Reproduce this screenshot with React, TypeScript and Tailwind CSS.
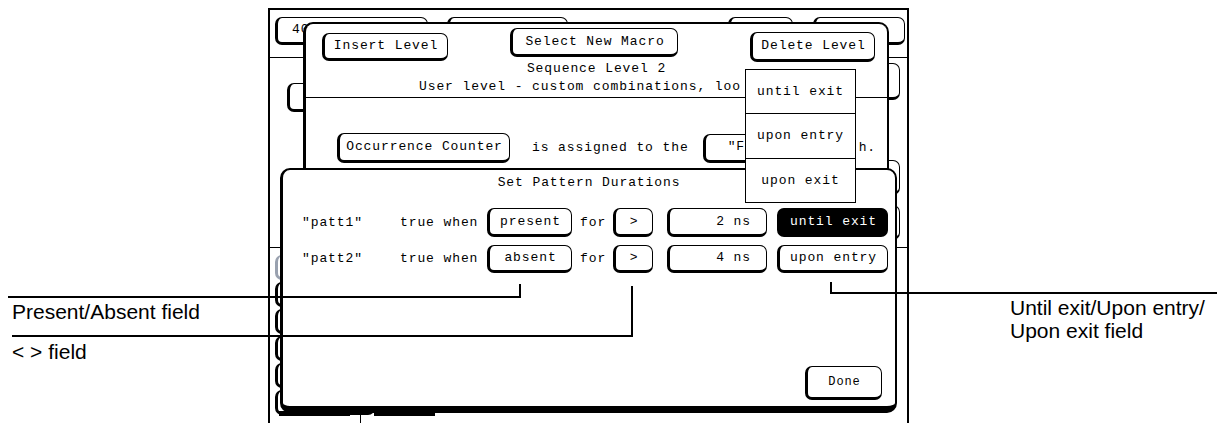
import React from "react";

type BtnProps = {
  className?: string;
  dark?: boolean;
  children?: React.ReactNode;
};

function Btn({ className = "", dark = false, children }: BtnProps) {
  return (
    <div
      className={`flex shrink-0 items-center justify-center whitespace-nowrap rounded-[7px] border-t border-r border-b-[3px] border-l-[3px] border-black ${
        dark ? "bg-black text-white" : "bg-white text-black"
      } ${className}`}
    >
      {children}
    </div>
  );
}

function BackScreen() {
  return (
    <div className="absolute left-[268px] top-[8px] flex h-[415px] w-[641px] flex-col border-x-2 border-t-2 border-black">
      {/* top softkey row */}
      <div className="flex h-[48px] shrink-0 items-start border-b border-black pl-[5px] pt-[7px]">
        <Btn className="h-[28px] w-[153px] justify-start pl-[14px]">40</Btn>
        <Btn className="ml-[19px] h-[28px] w-[121px]" />
        <Btn className="ml-[160px] h-[28px] w-[65px]" />
        <Btn className="ml-[20px] h-[28px] w-[92px]" />
      </div>
      {/* middle area */}
      <div className="flex h-[190px] shrink-0 justify-between border-b border-black">
        <div className="pl-[17px] pt-[25px]">
          <Btn className="h-[29px] w-[100px]" />
        </div>
        <div className="flex flex-col pr-[7px] pt-[5px]">
          <Btn className="h-[37px] w-[100px]" />
          <Btn className="mt-[60px] h-[35px] w-[100px]" />
          <Btn className="mt-[10px] h-[35px] w-[100px]" />
        </div>
      </div>
      {/* lower left stack */}
      <div className="flex flex-col gap-[2px] pl-[5px] pt-[7px]">
        <Btn className="h-[25px] w-[100px] border-l border-gray-400" />
        <Btn className="h-[25px] w-[100px]" />
        <Btn className="h-[25px] w-[100px]" />
        <Btn className="h-[25px] w-[100px]" />
        <Btn className="h-[25px] w-[100px]" />
        <Btn className="h-[25px] w-[100px]" />
      </div>
    </div>
  );
}

function SequenceDialog() {
  return (
    <div className="absolute left-[303px] top-[22px] flex h-[160px] w-[586px] flex-col rounded-t-[10px] border-t-2 border-r-2 border-l-[3px] border-black bg-white">
      <div className="flex h-[36px] shrink-0 items-start pl-[16px]">
        <Btn className="mt-[9px] h-[28px] w-[126px]">Insert Level</Btn>
        <Btn className="ml-[62px] mt-[4px] h-[29px] w-[168px]">Select New Macro</Btn>
        <Btn className="ml-[72px] mt-[8px] h-[30px] w-[125px]">Delete Level</Btn>
      </div>
      <div className="h-[18px] text-center leading-[18px]">Sequence Level 2</div>
      <div className="h-[18px] whitespace-nowrap pl-[113px] leading-[18px]">
        User level - custom combinations, loo
      </div>
      <div className="mt-[1px] h-px bg-black" />
      <div className="mt-[35px] flex h-[30px] items-center pl-[31px]">
        <Btn className="h-[30px] w-[173px]">Occurrence Counter</Btn>
        <span className="ml-[22px] whitespace-nowrap">is assigned to the</span>
        <Btn className="ml-[14px] h-[29px] w-[120px] justify-start pl-[22px]">″F</Btn>
        <span className="ml-[36px]">h.</span>
      </div>
    </div>
  );
}

function DurationsDialog() {
  return (
    <div className="absolute left-[280px] top-[168px] flex h-[245px] w-[617px] flex-col rounded-[10px] border-t-2 border-r-2 border-b-[7px] border-l-[3px] border-black bg-white">
      <div className="h-[26px] shrink-0 text-center leading-[26px]">Set Pattern Durations</div>
      <div className="mt-[12px] flex h-[29px] items-center pl-[19px]">
        <span className="w-[98px]">″patt1″</span>
        <span className="w-[87px]">true when</span>
        <Btn className="h-[29px] w-[85px]">present</Btn>
        <span className="w-[41px] pl-[8px]">for</span>
        <Btn className="h-[29px] w-[40px]">&gt;</Btn>
        <Btn className="ml-[14px] h-[29px] w-[100px] justify-end pr-[15px]">2 ns</Btn>
        <Btn dark className="ml-[10px] h-[29px] w-[111px]">until exit</Btn>
      </div>
      <div className="mt-[8px] flex h-[28px] items-center pl-[19px]">
        <span className="w-[98px]">″patt2″</span>
        <span className="w-[87px]">true when</span>
        <Btn className="h-[28px] w-[85px]">absent</Btn>
        <span className="w-[41px] pl-[8px]">for</span>
        <Btn className="h-[28px] w-[40px]">&gt;</Btn>
        <Btn className="ml-[14px] h-[28px] w-[100px] justify-end pr-[15px]">4 ns</Btn>
        <Btn className="ml-[10px] h-[28px] w-[111px]">upon entry</Btn>
      </div>
      <div className="mt-auto flex justify-end pb-[6px] pr-[13px]">
        <Btn className="h-[34px] w-[77px] text-[12px]">Done</Btn>
      </div>
    </div>
  );
}

function ChoiceMenu() {
  const items = ["until exit", "upon entry", "upon exit"];
  return (
    <div className="absolute left-[745px] top-[69px] flex h-[134px] w-[111px] flex-col border border-black bg-white">
      {items.map((item, i) => (
        <div
          key={item}
          className={`flex flex-1 items-center justify-center ${i > 0 ? "border-t border-black" : ""}`}
        >
          {item}
        </div>
      ))}
    </div>
  );
}

export default function App() {
  return (
    <div className="relative h-[423px] w-[1217px] overflow-hidden bg-white font-['Liberation_Mono',monospace] text-[13px] tracking-[0.9px] text-black">
      <BackScreen />
      <div className="absolute left-[279px] top-[411px] h-[5px] w-[71px] bg-black" />
      <div className="absolute left-[374px] top-[411px] h-[5px] w-[61px] bg-black" />
      <div className="absolute left-[360px] top-[411px] h-[12px] w-px bg-black" />
      <SequenceDialog />
      <DurationsDialog />
      <ChoiceMenu />

      {/* callout lines */}
      <div className="absolute left-[8px] top-[296px] h-[2px] w-[513px] bg-black" />
      <div className="absolute left-[519px] top-[284px] h-[14px] w-[2px] bg-black" />
      <div className="absolute left-[12px] top-[335px] h-[2px] w-[621px] bg-black" />
      <div className="absolute left-[631px] top-[286px] h-[51px] w-[2px] bg-black" />
      <div className="absolute left-[830px] top-[292px] h-[2px] w-[387px] bg-black" />
      <div className="absolute left-[830px] top-[282px] h-[12px] w-[2px] bg-black" />

      {/* callout labels */}
      <div className="absolute left-[12px] top-[300px] font-['Liberation_Sans',sans-serif] text-[21px] leading-[24px] tracking-normal">
        Present/Absent field
      </div>
      <div className="absolute left-[12px] top-[340px] font-['Liberation_Sans',sans-serif] text-[21px] leading-[24px] tracking-normal">
        &lt; &gt; field
      </div>
      <div className="absolute left-[1010px] top-[296px] font-['Liberation_Sans',sans-serif] text-[21px] leading-[23px] tracking-normal">
        Until exit/Upon entry/
        <br />
        Upon exit field
      </div>
    </div>
  );
}
